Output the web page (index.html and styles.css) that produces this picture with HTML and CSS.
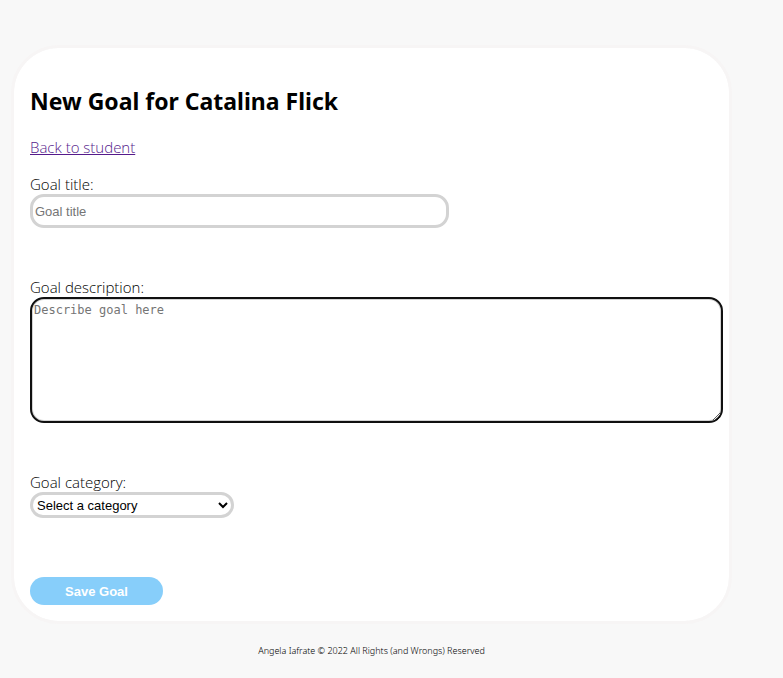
FILE: index.html
```html
<!DOCTYPE html>
<html lang="en">
<head>
  <meta charset="utf-8">
  <meta name="viewport" content="width=device-width, initial-scale=1">
  <title>New Goal</title>
  <link rel="stylesheet" href="styles.css">
</head>
<body>
  <main class="card">
    <h2 class="title">New Goal for Catalina Flick</h2>
    <a class="back" href="#">Back to student</a>
    <form class="form">
      <div class="field">
        <label for="goal-title">Goal title:</label>
        <input class="control text-input" id="goal-title" type="text" placeholder="Goal title">
      </div>
      <div class="field">
        <label for="goal-description">Goal description:</label>
        <textarea class="control description" id="goal-description" placeholder="Describe goal here"></textarea>
      </div>
      <div class="field">
        <label for="goal-category">Goal category:</label>
        <select class="control category" id="goal-category">
          <option>Select a category</option>
        </select>
      </div>
      <button class="save" type="submit">Save Goal</button>
    </form>
  </main>
  <footer class="footer">Angela Iafrate © 2022 All Rights (and Wrongs) Reserved</footer>
</body>
</html>
```

FILE: styles.css
```css
* {
  box-sizing: border-box;
}

body {
  margin: 45px 51px 0 11px;
  background: #f8f8f8;
  color: #000;
  font-family: "Segoe UI", "Open Sans", sans-serif;
  font-size: 15px;
  font-weight: 300;
  line-height: 20px;
}

.card {
  padding: 36px 6px 16px 16px;
  background: #fff;
  background-clip: padding-box;
  border: 3px solid #f7f5f5;
  border-radius: 48px;
}

.title {
  margin: 0 0 19px;
  font-family: "Segoe UI", "Noto Sans", sans-serif;
  font-size: 23px;
  font-weight: 700;
  line-height: 34px;
}

.back {
  display: block;
  width: fit-content;
  color: #551a8b;
}

.form {
  display: flex;
  flex-direction: column;
  align-items: flex-start;
  margin-top: 17px;
}

.field {
  display: flex;
  flex-direction: column;
  align-items: flex-start;
  width: 100%;
}

.control {
  margin: 0;
  border: 3px solid #d3d3d3;
  border-radius: 14px;
  background: #fff;
  font-family: "Liberation Sans", sans-serif;
  font-size: 13px;
  font-weight: 400;
}

.control::placeholder {
  color: #757575;
}

.text-input {
  width: 419px;
  max-width: 100%;
  height: 34px;
  margin-bottom: 49px;
  padding: 1px 2px;
}

.description {
  width: 100%;
  height: 126px;
  margin-bottom: 49px;
  padding: 4px 2px;
  border: 2px solid #101010;
  box-shadow: inset 0 0 0 1px #d3d3d3;
  font-family: "DejaVu Sans Mono", monospace;
  font-size: 12px;
  line-height: 15px;
  outline: none;
}

.category {
  width: 204px;
  height: 26px;
  margin-bottom: 59px;
  padding: 0;
  color: #000;
}

.save {
  width: 133px;
  height: 28px;
  padding: 0;
  border: 0;
  border-radius: 14px;
  background: #87cefa;
  color: #fff;
  font-family: "Liberation Sans", sans-serif;
  font-size: 13px;
  font-weight: 700;
}

.footer {
  margin-top: 17px;
  font-family: "Segoe UI", "Noto Sans", sans-serif;
  font-size: 9px;
  text-align: center;
}
```
